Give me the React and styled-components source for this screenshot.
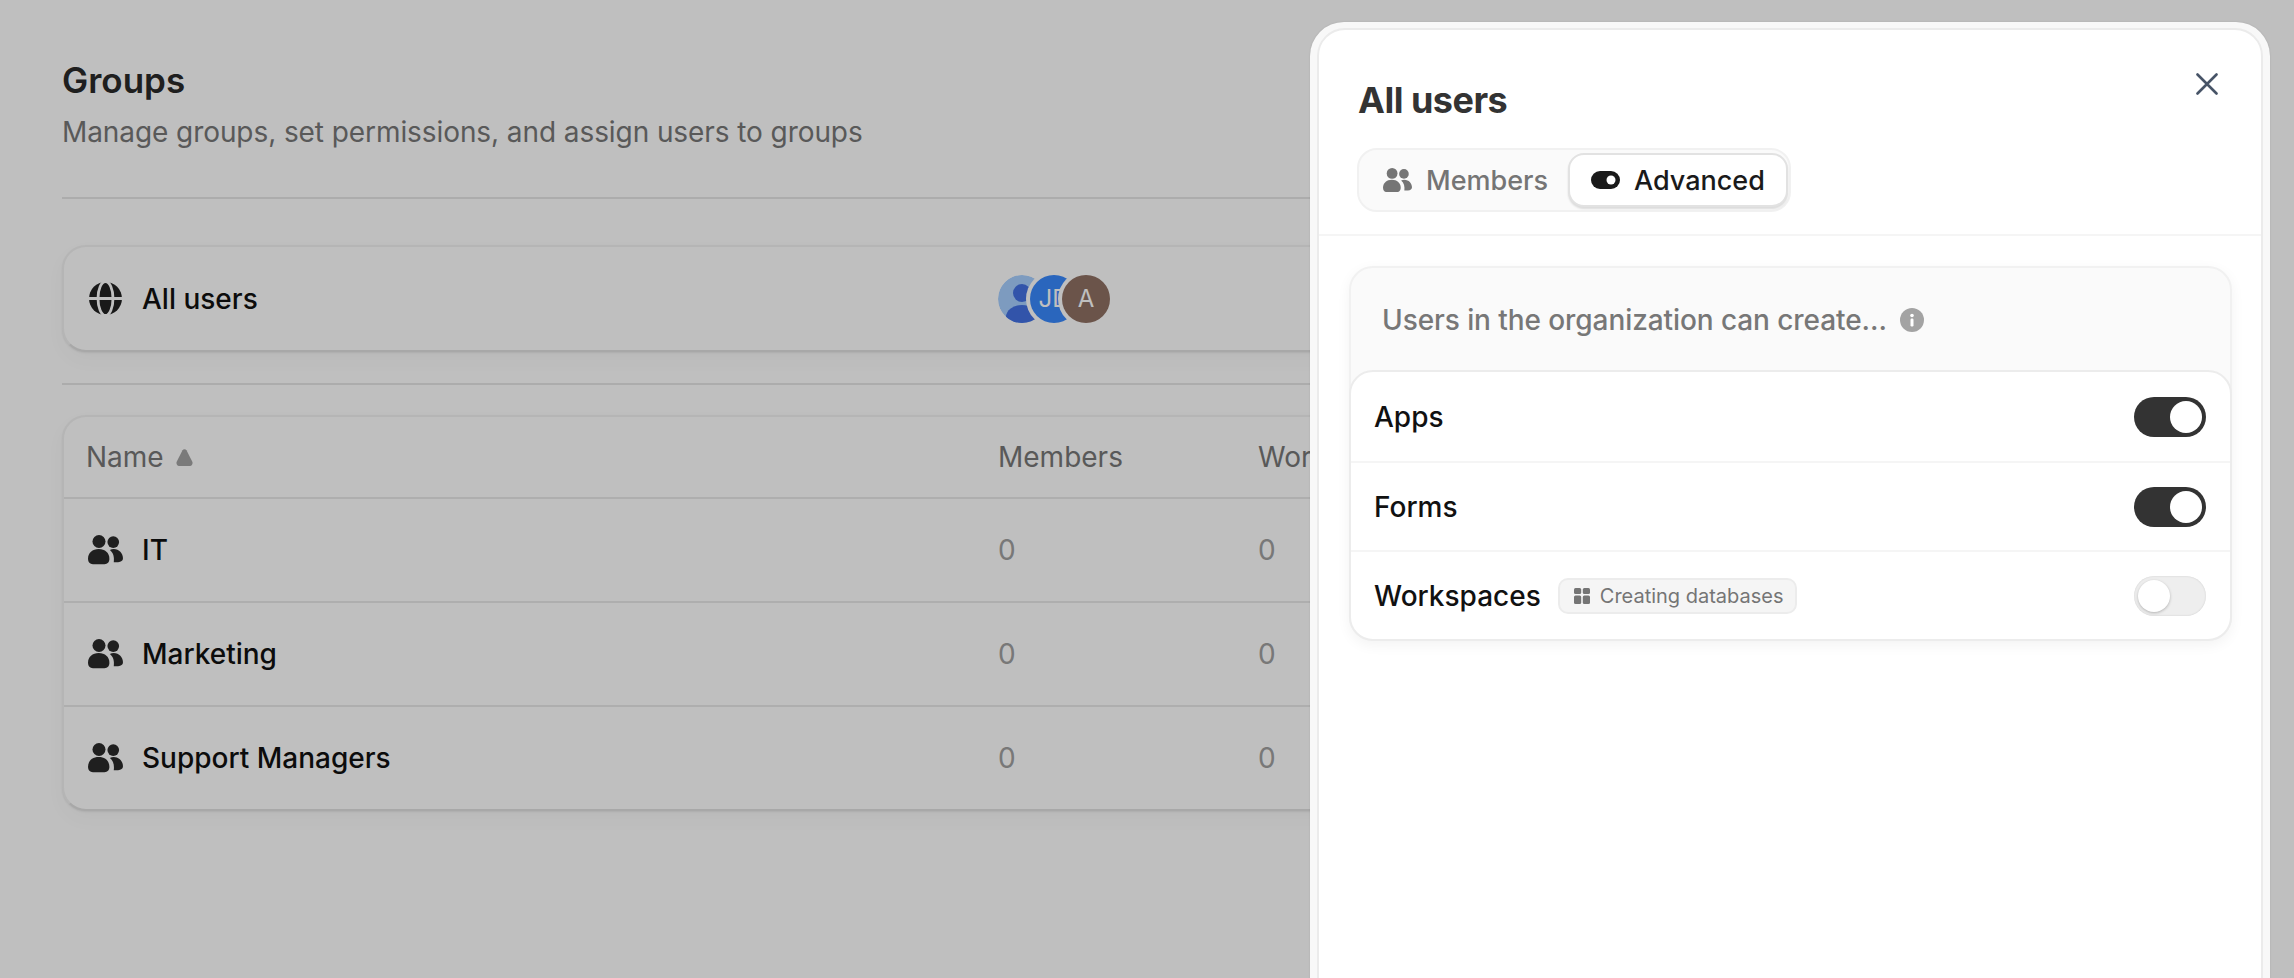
import React from "react";
import styled, { createGlobalStyle } from "styled-components";

const GlobalStyle = createGlobalStyle`
  html, body {
    margin: 0;
    height: 100%;
    background: #fff;
    overflow: hidden;
  }
  body {
    font-family: Inter, "Liberation Sans", sans-serif;
    -webkit-font-smoothing: antialiased;
  }
  * { box-sizing: border-box; }
`;

const UsersIcon = ({ size = 36 }) => (
  <svg width={size} height={size * 0.833} viewBox="0 0 36 30" fill="currentColor">
    <circle cx="11.300" cy="6.700" r="6.700" />
    <circle cx="26" cy="7.300" r="6" />
    <path d="M0 24.500C0 18.500 4.500 14.500 11 14.500S22 18.500 22 24.500C22 28 20 30 17 30H5C2 30 0 28 0 24.500z" />
    <path d="M22.500 15.500C23.800 14.800 25 14.500 26.500 14.500C32 14.500 36 19 36 24C36 26.500 34 28 31 28H26.500C27.200 23 26.200 18.500 22.500 15.500z" />
  </svg>
);

const GlobeIcon = () => (
  <svg width="33" height="33" viewBox="0 0 33 33">
    <circle cx="16.500" cy="16.500" r="16.500" fill="#222" />
    <ellipse cx="16.500" cy="16.500" rx="7.500" ry="17" fill="none" stroke="#fff" strokeWidth="2.800" />
    <path d="M0 16.500h33" stroke="#fff" strokeWidth="2.800" />
  </svg>
);

const ToggleIcon = () => (
  <svg width="29" height="18" viewBox="0 0 29 18">
    <rect width="29" height="18" rx="9" fill="#1a1a1a" />
    <circle cx="20" cy="9" r="4.500" fill="#fff" />
  </svg>
);

const CloseIcon = () => (
  <svg width="22" height="22" viewBox="0 0 22 22" fill="none" stroke="#475467" strokeWidth="2.600" strokeLinecap="round">
    <path d="M1.500 1.500l19 19M20.500 1.500l-19 19" />
  </svg>
);

const InfoIcon = () => (
  <svg width="24" height="24" viewBox="0 0 24 24">
    <circle cx="12" cy="12" r="12" fill="#a3a3a3" />
    <circle cx="12" cy="7.500" r="1.800" fill="#fff" />
    <rect x="10.500" y="10.500" width="3" height="8" rx="1.200" fill="#fff" />
  </svg>
);

const GridIcon = () => (
  <svg width="16" height="16" viewBox="0 0 16 16" fill="#757575">
    <rect width="7.200" height="6" rx="1.500" />
    <rect x="8.800" width="7.200" height="6" rx="1.500" />
    <rect y="7.600" width="7.200" height="8.400" rx="1.500" />
    <rect x="8.800" y="7.600" width="7.200" height="8.400" rx="1.500" />
  </svg>
);

const SortCaret = () => (
  <svg width="17" height="17" viewBox="0 0 17 17" fill="#a3a3a3">
    <path d="M6.500 1.200c.9-1.400 3.100-1.400 4 0l5.800 11.600c.8 1.800-.3 4.200-2.300 4.200H3c-2 0-3.100-2.400-2.300-4.200z" />
  </svg>
);

const PersonAvatar = () => (
  <svg width="48" height="48" viewBox="0 0 48 48">
    <circle cx="24" cy="24" r="24" fill="#a7cfff" />
    <circle cx="24" cy="18" r="9" fill="#4371e3" />
    <ellipse cx="24" cy="42" rx="16" ry="12" fill="#4371e3" />
  </svg>
);

const Page = styled.div`
  position: relative;
  width: 2294px;
  height: 978px;
  overflow: hidden;
  background: #fff;
`;

const Main = styled.main`
  padding: 56px 62px 0;
`;

const Title = styled.h1`
  margin: 0;
  font-size: 35px;
  line-height: 48px;
  font-weight: 600;
  color: #2a2a2a;
`;

const Subtitle = styled.p`
  margin: 8px 0 0;
  font-size: 28px;
  line-height: 40px;
  letter-spacing: -0.08px;
  color: #777;
`;

const Divider = styled.hr`
  margin: ${(p) => p.$top}px 0 ${(p) => p.$bottom}px;
  border: 0;
  height: 2px;
  background: #e6e6e6;
`;

const Card = styled.section`
  background: #fff;
  border: 2px solid #f2f2f2;
  border-bottom-color: #e0e0e0;
  border-radius: 24px;
  box-shadow: 0 1px 2px rgba(0, 0, 0, 0.08), 0 8px 20px rgba(0, 0, 0, 0.03);
  overflow: hidden;
`;

const AllUsersRow = styled.div`
  display: grid;
  grid-template-columns: 934px 1fr;
  align-items: center;
  height: 103px;
`;

const NameCell = styled.div`
  display: flex;
  align-items: center;
  gap: 19px;
  padding-left: 24px;
  font-size: 28px;
  font-weight: 500;
  color: #111;
`;

const Avatars = styled.div`
  display: flex;
`;

const Avatar = styled.div`
  width: 48px;
  height: 48px;
  border-radius: 50%;
  margin-left: ${(p) => (p.$first ? 0 : -16)}px;
  background: ${(p) => p.$bg || "transparent"};
  box-shadow: ${(p) => (p.$first ? "none" : "0 0 0 4px #fff")};
  color: #fff;
  font-size: 24px;
  display: flex;
  align-items: center;
  justify-content: center;
  position: relative;
  overflow: hidden;
`;

const TableRow = styled.div`
  display: grid;
  grid-template-columns: 934px 260px 1fr;
  align-items: center;
  height: ${(p) => (p.$head ? 80 : 104)}px;
  border-top: ${(p) => (p.$head ? 0 : "2px solid #e8e8e8")};
`;

const HeadCell = styled.div`
  display: flex;
  align-items: center;
  gap: 12px;
  padding-left: ${(p) => (p.$first ? 22 : 0)}px;
  font-size: 28px;
  color: #777;
`;

const CountCell = styled.div`
  font-size: 28px;
  color: #a0a0a0;
`;

const RowIcon = styled.span`
  display: inline-flex;
  justify-content: center;
  width: 35px;
  color: #2a2a2a;
`;

const Scrim = styled.div`
  position: absolute;
  inset: 0;
  background: rgba(0, 0, 0, 0.25);
`;

const Drawer = styled.aside`
  position: absolute;
  top: 22px;
  left: 1310px;
  width: 960px;
  height: 1000px;
  padding: 6px 7px 0;
  background: #f8f8f8;
  border-radius: 34px;
  box-shadow: 0 0 2px rgba(0, 0, 0, 0.12);
`;

const DrawerInner = styled.div`
  position: relative;
  height: 100%;
  background: #fff;
  border: 2px solid #ebebeb;
  border-radius: 28px;
`;

const DrawerHeader = styled.header`
  height: 206px;
  padding: 47px 39px 0;
  border-bottom: 2px solid #f5f5f5;
`;

const DrawerTitle = styled.h2`
  margin: 0;
  font-size: 36px;
  line-height: 46px;
  font-weight: 700;
  letter-spacing: -0.5px;
  color: #333;
`;

const CloseButton = styled.button`
  position: absolute;
  top: 43px;
  right: 43px;
  display: flex;
  padding: 0;
  border: 0;
  background: none;
`;

const Tabs = styled.div`
  display: inline-flex;
  align-items: center;
  height: 64px;
  margin: 25px 0 0 -1px;
  padding: 0 1px 0 24px;
  background: #fafafa;
  border: 2px solid #f1f1f1;
  border-radius: 20px;
`;

const Tab = styled.div`
  display: flex;
  align-items: center;
  gap: 14px;
  height: 54px;
  font-size: 27px;
  font-weight: 500;
  color: ${(p) => (p.$active ? "#1a1a1a" : "#757575")};
  ${(p) =>
    p.$active
      ? `
    margin-left: 20px;
    padding: 0 21px;
    background: #fff;
    border: 2px solid #e2e2e2;
    border-radius: 16px;
    box-shadow: 0 2px 2px rgba(0, 0, 0, 0.12);
  `
      : ""}
`;

const DrawerBody = styled.div`
  padding: 30px 29px 0 30px;
`;

const Settings = styled.section`
  background: #fafafa;
  border: 2px solid #f1f1f1;
  border-radius: 24px;
  box-shadow: 0 4px 14px rgba(0, 0, 0, 0.05);
`;

const SettingsHead = styled.div`
  display: flex;
  align-items: center;
  gap: 13px;
  height: 102px;
  padding: 2px 0 0 31px;
  font-size: 28px;
  font-weight: 500;
  letter-spacing: -0.08px;
  color: #777;
`;

const SettingsList = styled.div`
  margin: 0 -2px -2px;
  background: #fff;
  border: 2px solid #ececec;
  border-radius: 24px;
`;

const SettingRow = styled.div`
  display: flex;
  align-items: center;
  height: 89px;
  padding: 0 24px 0 23px;
  border-top: ${(p) => (p.$first ? 0 : "2px solid #f5f5f5")};
`;

const SettingLabel = styled.span`
  font-size: 28px;
  font-weight: 500;
  color: #111;
`;

const Badge = styled.span`
  display: inline-flex;
  align-items: center;
  gap: 10px;
  height: 36px;
  margin-left: 17px;
  padding: 0 11px 0 14px;
  background: #f5f5f5;
  border: 2px solid #ececec;
  border-radius: 10px;
  font-size: 20px;
  color: #757575;
`;

const Switch = styled.span`
  display: flex;
  justify-content: ${(p) => (p.$on ? "flex-end" : "flex-start")};
  align-items: center;
  width: 72px;
  height: 40px;
  margin-left: auto;
  padding: 0 4px;
  border-radius: 20px;
  background: ${(p) => (p.$on ? "#333" : "#eee")};
  box-shadow: ${(p) => (p.$on ? "none" : "inset 0 0 2px rgba(0,0,0,0.15)")};

  &::after {
    content: "";
    width: 32px;
    height: 32px;
    border-radius: 50%;
    background: #fff;
    box-shadow: ${(p) => (p.$on ? "none" : "0 1px 3px rgba(0,0,0,0.25)")};
  }
`;

const groups = ["IT", "Marketing", "Support Managers"];

export default function App() {
  return (
    <Page>
      <GlobalStyle />
      <Main>
        <Title>Groups</Title>
        <Subtitle>Manage groups, set permissions, and assign users to groups</Subtitle>
        <Divider $top={45} $bottom={46} />
        <Card>
          <AllUsersRow>
            <NameCell>
              <RowIcon>
                <GlobeIcon />
              </RowIcon>
              All users
            </NameCell>
            <Avatars>
              <Avatar $first>
                <PersonAvatar />
              </Avatar>
              <Avatar $bg="#3888fd">JD</Avatar>
              <Avatar $bg="#8f7063">A</Avatar>
            </Avatars>
          </AllUsersRow>
        </Card>
        <Divider $top={31} $bottom={30} />
        <Card>
          <TableRow $head>
            <HeadCell $first>
              Name
              <SortCaret />
            </HeadCell>
            <HeadCell>Members</HeadCell>
            <HeadCell>Workspaces</HeadCell>
          </TableRow>
          {groups.map((name) => (
            <TableRow key={name}>
              <NameCell>
                <RowIcon>
                  <UsersIcon size={35} />
                </RowIcon>
                {name}
              </NameCell>
              <CountCell>0</CountCell>
              <CountCell>0</CountCell>
            </TableRow>
          ))}
        </Card>
      </Main>
      <Scrim />
      <Drawer>
        <DrawerInner>
          <DrawerHeader>
            <DrawerTitle>All users</DrawerTitle>
            <CloseButton>
              <CloseIcon />
            </CloseButton>
            <Tabs>
              <Tab>
                <UsersIcon size={29} />
                Members
              </Tab>
              <Tab $active>
                <ToggleIcon />
                Advanced
              </Tab>
            </Tabs>
          </DrawerHeader>
          <DrawerBody>
            <Settings>
              <SettingsHead>
                Users in the organization can create...
                <InfoIcon />
              </SettingsHead>
              <SettingsList>
                <SettingRow $first>
                  <SettingLabel>Apps</SettingLabel>
                  <Switch $on />
                </SettingRow>
                <SettingRow>
                  <SettingLabel>Forms</SettingLabel>
                  <Switch $on />
                </SettingRow>
                <SettingRow>
                  <SettingLabel>Workspaces</SettingLabel>
                  <Badge>
                    <GridIcon />
                    Creating databases
                  </Badge>
                  <Switch />
                </SettingRow>
              </SettingsList>
            </Settings>
          </DrawerBody>
        </DrawerInner>
      </Drawer>
    </Page>
  );
}
